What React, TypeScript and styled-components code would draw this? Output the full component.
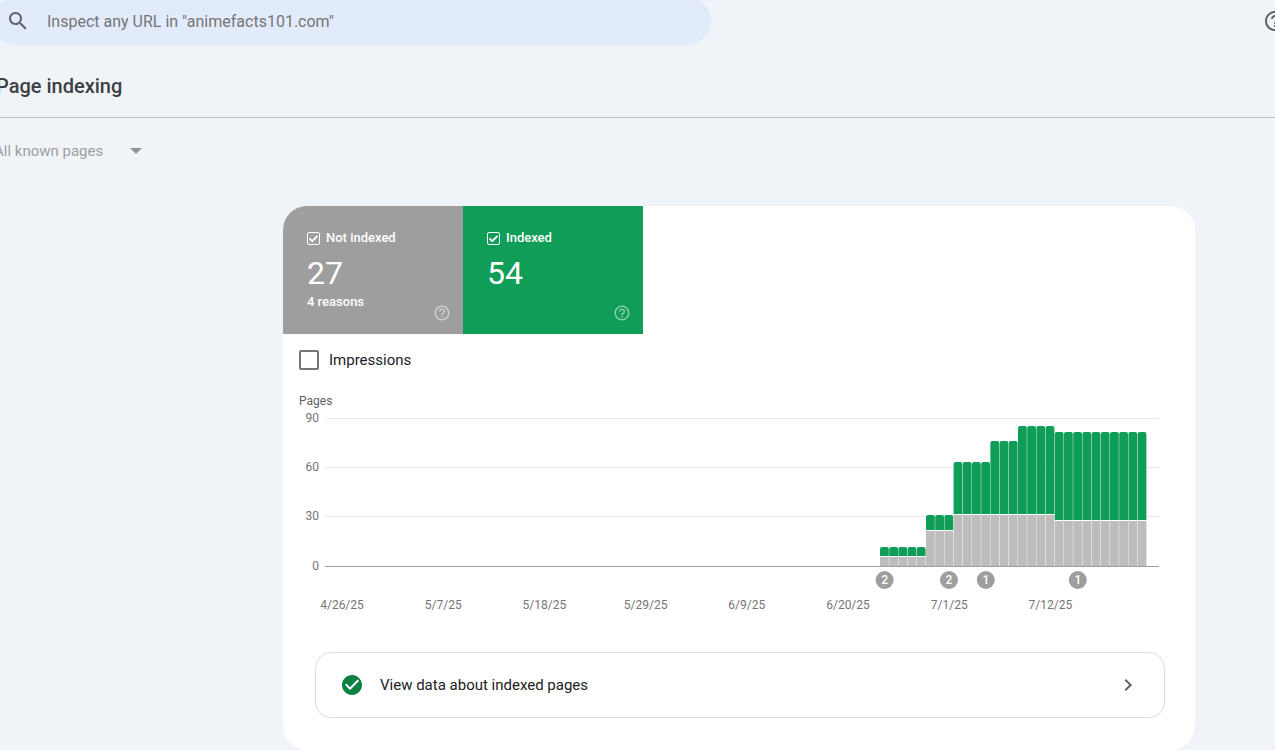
import React from "react";
import styled, { createGlobalStyle } from "styled-components";

const GlobalStyle = createGlobalStyle`
  *, *::before, *::after { box-sizing: border-box; }
  body {
    margin: 0;
    background: #f0f4f9;
    color: #202124;
    font-family: Roboto, "Liberation Sans", sans-serif;
    overflow: hidden;
  }
  button, input, select { font: inherit; }
`;

const Page = styled.div`
  margin: -3px -24px 0 -8px;
`;

const TopBar = styled.header`
  display: flex;
  align-items: center;
  justify-content: space-between;
`;

const SearchBox = styled.label`
  display: flex;
  align-items: center;
  gap: 17px;
  width: 55%;
  height: 48px;
  padding: 0 14px;
  border-radius: 24px;
  background: #e2ebfc;
  color: #5f6368;
`;

const SearchInput = styled.input`
  flex: 1;
  min-width: 0;
  padding: 0;
  border: 0;
  outline: 0;
  background: transparent;
  color: #202124;
  font-size: 16px;
  &::placeholder { color: #757575; opacity: 1; }
`;

const IconButton = styled.button<{ $color: string }>`
  display: flex;
  padding: 0;
  border: 0;
  background: transparent;
  color: ${(p) => p.$color};
  cursor: pointer;
`;

const TopActions = styled.div`
  padding-right: 12px;
`;

const TitleBar = styled.div`
  display: flex;
  align-items: center;
  height: 73px;
  padding: 10px 4px 0;
  border-bottom: 1px solid #c0c4c9;
`;

const Title = styled.h1`
  margin: 0;
  color: #3c4043;
  font-family: "Google Sans", Roboto, sans-serif;
  font-size: 20px;
  font-weight: 500;
  line-height: 28px;
`;

const Filter = styled.div`
  display: flex;
  align-items: center;
  height: 66px;
  padding: 0 2px;
  color: #9aa0a6;
`;

const FilterSelect = styled.select`
  width: 136px;
  padding: 0;
  border: 0;
  appearance: none;
  background: transparent;
  color: #9e9e9e;
  font-size: 15px;
  line-height: 20px;
`;

const Card = styled.main`
  margin: 22px 104px 24px 291px;
  padding-bottom: 32px;
  border-radius: 24px;
  background: #fff;
  overflow: hidden;
`;

const Tiles = styled.div`
  display: flex;
`;

const Tile = styled.section<{ $color: string }>`
  display: flex;
  width: 180px;
  height: 128px;
  padding: 24px 12px 12px 24px;
  background: ${(p) => p.$color};
  color: #fff;
`;

const TileBody = styled.div`
  flex: 1;
  font-size: 13px;
  font-weight: 500;
  line-height: 16px;
`;

const TileLabel = styled.label`
  display: flex;
  align-items: center;
  gap: 6px;
`;

const Tick = styled.input<{ $size: number; $border: string }>`
  appearance: none;
  flex: none;
  width: ${(p) => p.$size}px;
  height: ${(p) => p.$size}px;
  margin: 0;
  border: ${(p) => p.$border};
  border-radius: 2px;
  &:checked {
    background: url("data:image/svg+xml,%3Csvg xmlns='http://www.w3.org/2000/svg' viewBox='0 0 11 11'%3E%3Cpath d='M1.5 5.5l2.7 2.7L9.5 2.8' fill='none' stroke='white' stroke-width='1.8'/%3E%3C/svg%3E") center / 11px no-repeat;
  }
`;

const Count = styled.div`
  margin: 8px 0 2px;
  font-size: 32px;
  font-weight: 400;
  line-height: 38px;
`;

const TileHelp = styled.div`
  align-self: flex-end;
  opacity: 0.5;
`;

const Impressions = styled.label`
  display: flex;
  align-items: center;
  gap: 10px;
  width: fit-content;
  margin: 16px 16px 20px;
  font-size: 15px;
  line-height: 20px;
`;

const Chart = styled.svg`
  display: block;
  width: 100%;
  font-size: 12px;
`;

const ResultLink = styled.a`
  display: flex;
  align-items: center;
  height: 66px;
  margin: 32px 30px 0 32px;
  padding: 0 24px;
  border: 1px solid #dadce0;
  border-radius: 16px;
  color: #202124;
  font-size: 15px;
  text-decoration: none;
`;

const ResultText = styled.span`
  flex: 1;
  padding-left: 16px;
`;

const HELP =
  "M11 18h2v-2h-2v2zm1-16C6.48 2 2 6.48 2 12s4.48 10 10 10 10-4.48 10-10S17.52 2 12 2zm0 18c-4.41 0-8-3.59-8-8s3.59-8 8-8 8 3.59 8 8-3.59 8-8 8zm0-14c-2.21 0-4 1.79-4 4h2c0-1.1.9-2 2-2s2 .9 2 2c0 2-3 1.75-3 5h2c0-2.25 3-2.5 3-5 0-2.21-1.79-4-4-4z";
const SEARCH =
  "M15.5 14h-.79l-.28-.27C15.41 12.59 16 11.11 16 9.5 16 5.91 13.09 3 9.5 3S3 5.91 3 9.5 5.91 16 9.5 16c1.61 0 3.09-.59 4.23-1.57l.27.28v.79l5 4.99L20.49 19l-4.99-5zm-6 0C7.01 14 5 11.99 5 9.5S7.01 5 9.5 5 14 7.01 14 9.5 11.99 14 9.5 14z";
const CHECK_CIRCLE =
  "M12 2C6.48 2 2 6.48 2 12s4.48 10 10 10 10-4.48 10-10S17.52 2 12 2zm-2 15l-5-5 1.41-1.41L10 14.17l7.59-7.59L19 8l-9 9z";
const CHEVRON = "M10 6L8.59 7.41 13.17 12l-4.58 4.59L10 18l6-6z";

const Icon = ({ d, size = 24, color = "currentColor" }: { d: string; size?: number; color?: string }) => (
  <svg width={size} height={size} viewBox="0 0 24 24" fill={color} aria-hidden="true">
    <path d={d} />
  </svg>
);

const BASE = 176;
const BAR_WIDTH = 9.2;
const FIRST_BAR = 597;

const groups = [
  { days: 5, excluded: 5, total: 11 },
  { days: 3, excluded: 21, total: 31 },
  { days: 4, excluded: 31, total: 63 },
  { days: 3, excluded: 31, total: 76 },
  { days: 4, excluded: 31, total: 85 },
  { days: 10, excluded: 27, total: 81 },
];
const bars = groups.flatMap((g) => Array.from({ length: g.days }, () => g));
const dates = ["4/26/25", "5/7/25", "5/18/25", "5/29/25", "6/9/25", "6/20/25", "7/1/25", "7/12/25"];
const markers = [
  { bar: 0, label: "2" },
  { bar: 7, label: "2" },
  { bar: 11, label: "1" },
  { bar: 21, label: "1" },
];
const yOf = (value: number) => Math.floor(BASE - value * 1.644);

const IndexChart = () => (
  <Chart viewBox="0 0 912 230" role="img" aria-label="Pages over time">
    <text x="16" y="15" fill="#616161">Pages</text>
    {[90, 60, 30, 0].map((v) => (
      <g key={v}>
        <rect x="42" y={yOf(v)} width="834" height="1" fill={v ? "#ebebeb" : "#9e9e9e"} />
        <text x="36" y={yOf(v) + 4} textAnchor="end" fill="#757575">{v}</text>
      </g>
    ))}
    {bars.map((b, i) => {
      const x = FIRST_BAR + i * BAR_WIDTH;
      const top = yOf(b.total);
      const split = yOf(b.excluded);
      const r = x + BAR_WIDTH - 0.4;
      return (
        <g key={i}>
          <path
            d={`M${x} ${split - 1}V${top + 2}q0-2 2-2H${r - 2}q2 0 2 2V${split - 1}z`}
            fill="#0f9d58"
          />
          <rect x={x} y={split - 1} width={BAR_WIDTH} height="1" fill="#fff" />
          <rect x={x} y={split} width={BAR_WIDTH - 0.4} height={BASE - split} fill="#bdbdbd" />
        </g>
      );
    })}
    {markers.map((m) => {
      const cx = FIRST_BAR + (m.bar + 0.5) * BAR_WIDTH;
      return (
        <g key={m.bar}>
          <circle cx={cx} cy="190" r="9" fill="#9e9e9e" />
          <text x={cx} y="194" textAnchor="middle" fontSize="12" fontWeight="500" fill="#fff">{m.label}</text>
        </g>
      );
    })}
    {dates.map((d, i) => (
      <text key={d} x={59 + i * 101.2} y="219" textAnchor="middle" fill="#757575">{d}</text>
    ))}
  </Chart>
);

const tiles = [
  { label: "Not indexed", count: 27, note: "4 reasons", color: "#9e9e9e" },
  { label: "Indexed", count: 54, note: "", color: "#0f9d58" },
];

export default function App() {
  return (
    <>
      <GlobalStyle />
      <Page>
        <TopBar>
          <SearchBox>
            <Icon d={SEARCH} />
            <SearchInput aria-label="Inspect URL" placeholder={'Inspect any URL in "animefacts101.com"'} />
          </SearchBox>
          <TopActions>
            <IconButton $color="#5f6368" aria-label="Help">
              <Icon d={HELP} />
            </IconButton>
          </TopActions>
        </TopBar>
        <TitleBar>
          <Title>Page indexing</Title>
        </TitleBar>
        <Filter>
          <FilterSelect aria-label="Pages shown">
            <option>All known pages</option>
          </FilterSelect>
          <svg width="12" height="6" viewBox="0 0 12 6" fill="#8f9296" aria-hidden="true">
            <path d="M0 0h12L6 6z" />
          </svg>
        </Filter>
        <Card>
          <Tiles>
            {tiles.map((t) => (
              <Tile key={t.label} $color={t.color}>
                <TileBody>
                  <TileLabel>
                    <Tick type="checkbox" defaultChecked $size={13} $border="1px solid #fff" />
                    {t.label}
                  </TileLabel>
                  <Count>{t.count}</Count>
                  {t.note}
                </TileBody>
                <TileHelp>
                  <IconButton $color="#fff" aria-label={`About ${t.label}`}>
                    <Icon d={HELP} size={18} />
                  </IconButton>
                </TileHelp>
              </Tile>
            ))}
          </Tiles>
          <Impressions>
            <Tick type="checkbox" $size={20} $border="2px solid #757575" />
            Impressions
          </Impressions>
          <IndexChart />
          <ResultLink href="#indexed">
            <Icon d={CHECK_CIRCLE} color="#0d8043" />
            <ResultText>View data about indexed pages</ResultText>
            <Icon d={CHEVRON} color="#5f6368" />
          </ResultLink>
        </Card>
      </Page>
    </>
  );
}
